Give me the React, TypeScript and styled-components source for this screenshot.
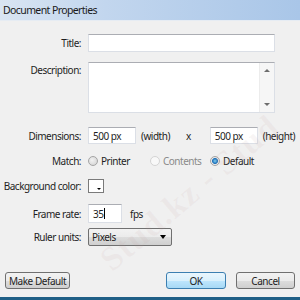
import styled, { createGlobalStyle } from 'styled-components'

const GlobalStyle = createGlobalStyle`
  html, body {
    margin: 0;
    padding: 0;
    background: #f0f0f0;
  }
  body {
    font-family: "Noto Sans", "Open Sans", sans-serif;
    font-size: 10px;
    letter-spacing: -0.5px;
    color: #1e1e1e;
  }
`

const Dialog = styled.div`
  position: relative;
  width: 300px;
  height: 300px;
  box-sizing: border-box;
  display: flex;
  flex-direction: column;
  background: #f0f0f0;
  border-bottom: 3px solid #1f5f86;
  overflow: hidden;
`

const TitleBar = styled.div`
  height: 20px;
  flex-shrink: 0;
  display: flex;
  align-items: center;
  padding-left: 3px;
  font-size: 10.5px;
  letter-spacing: -0.6px;
  color: #1a1a1a;
  background: linear-gradient(90deg, #d9e5f2 0%, #c2d6ee 35%, #a9c6e8 100%);
  border-bottom: 1px solid #e6ecf3;
`

const Body = styled.div`
  flex: 1;
  display: flex;
  flex-direction: column;
  padding: 13px 5px 0 0;
`

const Row = styled.div<{ $top: number; $h: number; $alignTop?: boolean }>`
  display: grid;
  grid-template-columns: 81px 1fr;
  column-gap: 7px;
  margin-top: ${p => p.$top}px;
  height: ${p => p.$h}px;
  align-items: ${p => (p.$alignTop ? 'start' : 'center')};
`

const Label = styled.label<{ $pt?: number }>`
  text-align: right;
  white-space: nowrap;
  padding-top: ${p => p.$pt || 0}px;
`

const Field = styled.div`
  display: flex;
  align-items: center;
  height: 100%;
`

const TextInput = styled.div<{ $w: number }>`
  box-sizing: border-box;
  width: ${p => p.$w}px;
  height: 100%;
  background: #fff;
  border: 1px solid #dbdfe6;
  border-top-color: #abadb3;
  display: flex;
  align-items: center;
  padding-left: 4px;
`

const Caret = styled.span`
  display: inline-block;
  width: 1px;
  height: 11px;
  background: #000;
  margin-left: 1px;
`

const TextArea = styled.div`
  box-sizing: border-box;
  width: 187px;
  height: 100%;
  background: #fff;
  border: 1px solid #dbdfe6;
  border-top-color: #abadb3;
  display: flex;
  justify-content: flex-end;
`

const ScrollBar = styled.div`
  width: 14px;
  display: flex;
  flex-direction: column;
  justify-content: space-between;
  align-items: center;
  padding: 6px 0 6px;
  background: #f6f6f6;
  border-left: 1px solid #ececec;
`

const Arrow = styled.span<{ $down?: boolean }>`
  width: 0;
  height: 0;
  border-left: 3px solid transparent;
  border-right: 3px solid transparent;
  ${p => (p.$down ? 'border-top: 3px solid #6d6d6d;' : 'border-bottom: 3px solid #6d6d6d;')}
`

const Note = styled.span<{ $ml: number }>`
  display: flex;
  align-items: center;
  height: 100%;
  margin-left: ${p => p.$ml}px;
  white-space: nowrap;
`

const RadioGroup = styled.div`
  display: flex;
  align-items: center;
  height: 100%;
`

const RadioItem = styled.span<{ $w?: number; $dim?: boolean }>`
  display: flex;
  align-items: center;
  gap: 3px;
  width: ${p => (p.$w ? `${p.$w}px` : 'auto')};
  color: ${p => (p.$dim ? '#8a8a8a' : '#1e1e1e')};
`

const RadioCircle = styled.span<{ $checked?: boolean; $dim?: boolean }>`
  box-sizing: border-box;
  width: 10px;
  height: 10px;
  border-radius: 50%;
  border: 1px solid ${p => (p.$dim ? '#d4d4d4' : '#a4a4a4')};
  background: ${p =>
    p.$checked
      ? 'radial-gradient(circle, #7fd0f5 0, #1f70b8 2.5px, #e9e9e9 3.5px)'
      : p.$dim
      ? '#f8f8f8'
      : 'radial-gradient(circle at 40% 40%, #f2f2f2, #cfcfcf)'};
`

const Swatch = styled.div`
  box-sizing: border-box;
  width: 16px;
  height: 14px;
  background: #fff;
  border: 1px solid #7a7a7a;
  position: relative;
  &::after {
    content: '';
    position: absolute;
    right: 2px;
    bottom: 2px;
    border-left: 2px solid transparent;
    border-right: 2px solid transparent;
    border-top: 2px solid #000;
  }
`

const Select = styled.div`
  box-sizing: border-box;
  width: 84px;
  height: 100%;
  border: 1px solid #707070;
  border-radius: 2px;
  background: linear-gradient(#f2f2f2 0%, #ebebeb 50%, #dddddd 51%, #cfcfcf 100%);
  display: flex;
  align-items: center;
  justify-content: space-between;
  padding: 0 5px 0 3px;
`

const SelectArrow = styled.span`
  border-left: 3px solid transparent;
  border-right: 3px solid transparent;
  border-top: 4px solid #000;
`

const Footer = styled.div`
  display: flex;
  align-items: center;
  margin-top: 26px;
  padding-left: 5px;
  height: 17px;
`

const Button = styled.button<{ $w: number; $primary?: boolean; $ml?: number }>`
  box-sizing: border-box;
  width: ${p => p.$w}px;
  height: 17px;
  margin-left: ${p => p.$ml || 0}px;
  padding: 0;
  font-family: inherit;
  font-size: 10px;
  letter-spacing: -0.45px;
  color: #1e1e1e;
  border-radius: 3px;
  border: 1px solid ${p => (p.$primary ? '#3c7fb1' : '#707070')};
  background: ${p =>
    p.$primary
      ? 'linear-gradient(#eaf6fd 0%, #d9f0fc 50%, #bee6fd 51%, #a7d9f5 100%)'
      : 'linear-gradient(#f2f2f2 0%, #ebebeb 50%, #dddddd 51%, #cfcfcf 100%)'};
`

const Watermark = styled.div`
  position: absolute;
  left: 105px;
  top: 245px;
  transform: rotate(-40deg);
  transform-origin: left center;
  font-family: "Liberation Serif", serif;
  font-size: 34px;
  font-weight: bold;
  letter-spacing: 1px;
  white-space: nowrap;
  color: rgba(190, 150, 150, 0.09);
  pointer-events: none;
`

export default function App() {
  return (
    <>
      <GlobalStyle />
      <Dialog>
        <TitleBar>Document Properties</TitleBar>
        <Body>
          <Row $top={0} $h={18}>
            <Label>Title:</Label>
            <Field>
              <TextInput $w={187} />
            </Field>
          </Row>
          <Row $top={10} $h={51} $alignTop>
            <Label $pt={1}>Description:</Label>
            <Field>
              <TextArea>
                <ScrollBar>
                  <Arrow />
                  <Arrow $down />
                </ScrollBar>
              </TextArea>
            </Field>
          </Row>
          <Row $top={14} $h={17}>
            <Label>Dimensions:</Label>
            <Field>
              <TextInput $w={48}>500 px</TextInput>
              <Note $ml={5}>(width)</Note>
              <Note $ml={16}>x</Note>
              <Note $ml={19}>
                <TextInput $w={48}>500 px</TextInput>
              </Note>
              <Note $ml={5}>(height)</Note>
            </Field>
          </Row>
          <Row $top={10} $h={14}>
            <Label>Match:</Label>
            <RadioGroup>
              <RadioItem $w={62}>
                <RadioCircle />
                Printer
              </RadioItem>
              <RadioItem $w={60} $dim>
                <RadioCircle $dim />
                Contents
              </RadioItem>
              <RadioItem>
                <RadioCircle $checked />
                Default
              </RadioItem>
            </RadioGroup>
          </Row>
          <Row $top={11} $h={14}>
            <Label>Background color:</Label>
            <Field>
              <Swatch />
            </Field>
          </Row>
          <Row $top={11} $h={19}>
            <Label>Frame rate:</Label>
            <Field>
              <TextInput $w={34}>
                35
                <Caret />
              </TextInput>
              <Note $ml={8}>fps</Note>
            </Field>
          </Row>
          <Row $top={5} $h={18}>
            <Label>Ruler units:</Label>
            <Field>
              <Select>
                Pixels
                <SelectArrow />
              </Select>
            </Field>
          </Row>
          <Footer>
            <Button $w={65}>Make Default</Button>
            <Button $w={60} $ml={96} $primary>
              OK
            </Button>
            <Button $w={59} $ml={10}>
              Cancel
            </Button>
          </Footer>
        </Body>
        <Watermark>Stud.kz - Stud</Watermark>
      </Dialog>
    </>
  )
}
